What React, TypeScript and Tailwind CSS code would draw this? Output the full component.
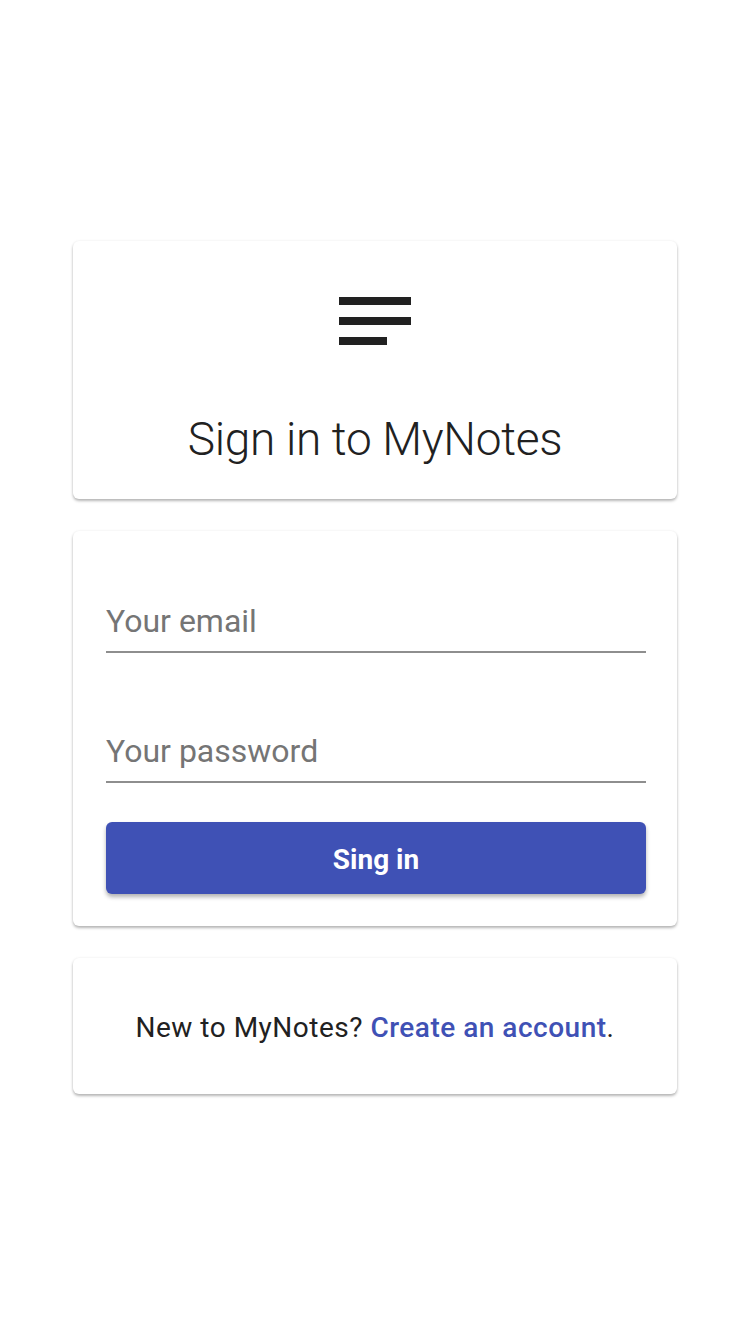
export default function App() {
    const card =
        "w-[604px] bg-white rounded-[6px] shadow-[0_2px_3px_rgba(0,0,0,0.28),0_0_3px_rgba(0,0,0,0.06)]"

    return (
        <div className="min-h-screen bg-white flex flex-col items-center justify-center gap-8 font-['Roboto',sans-serif]">
            <div className={`${card} flex flex-col items-center pt-8 pb-8`}>
                <svg viewBox="0 0 24 24" className="w-24 h-24 text-[#212121]" fill="currentColor">
                    <path d="M3 18h12v-2H3v2zM3 6v2h18V6H3zm0 7h18v-2H3v2z" />
                </svg>
                <h1 className="mt-[42px] text-[46px] leading-[56px] font-light tracking-[-0.3px] text-[#212121]">
                    Sign in to MyNotes
                </h1>
            </div>

            <div className={`${card} pl-[33px] pr-[31px] pt-[69px] pb-8`}>
                <input
                    type="email"
                    placeholder="Your email"
                    className="w-full h-[53px] pb-2 text-[32px] text-[#212121] placeholder-[#757575] border-b-2 border-[#8e8e8e] outline-none bg-transparent"
                />
                <input
                    type="password"
                    placeholder="Your password"
                    className="w-full h-[53px] pb-2 mt-[77px] text-[32px] text-[#212121] placeholder-[#757575] border-b-2 border-[#8e8e8e] outline-none bg-transparent"
                />
                <button className="mt-[39px] w-full h-[72px] pt-1 rounded-[6px] bg-[#3f51b5] text-white text-[28px] font-bold shadow-[0_3px_4px_rgba(0,0,0,0.3)]">
                    Sing in
                </button>
            </div>

            <div className={`${card} h-[136px] pt-1 flex items-center justify-center`}>
                <p className="text-[28px] tracking-[0.5px] text-[#212121]">
                    New to MyNotes?{" "}
                    <a href="#" className="text-[#3f51b5] font-medium">
                        Create an account
                    </a>
                    .
                </p>
            </div>
        </div>
    )
}
